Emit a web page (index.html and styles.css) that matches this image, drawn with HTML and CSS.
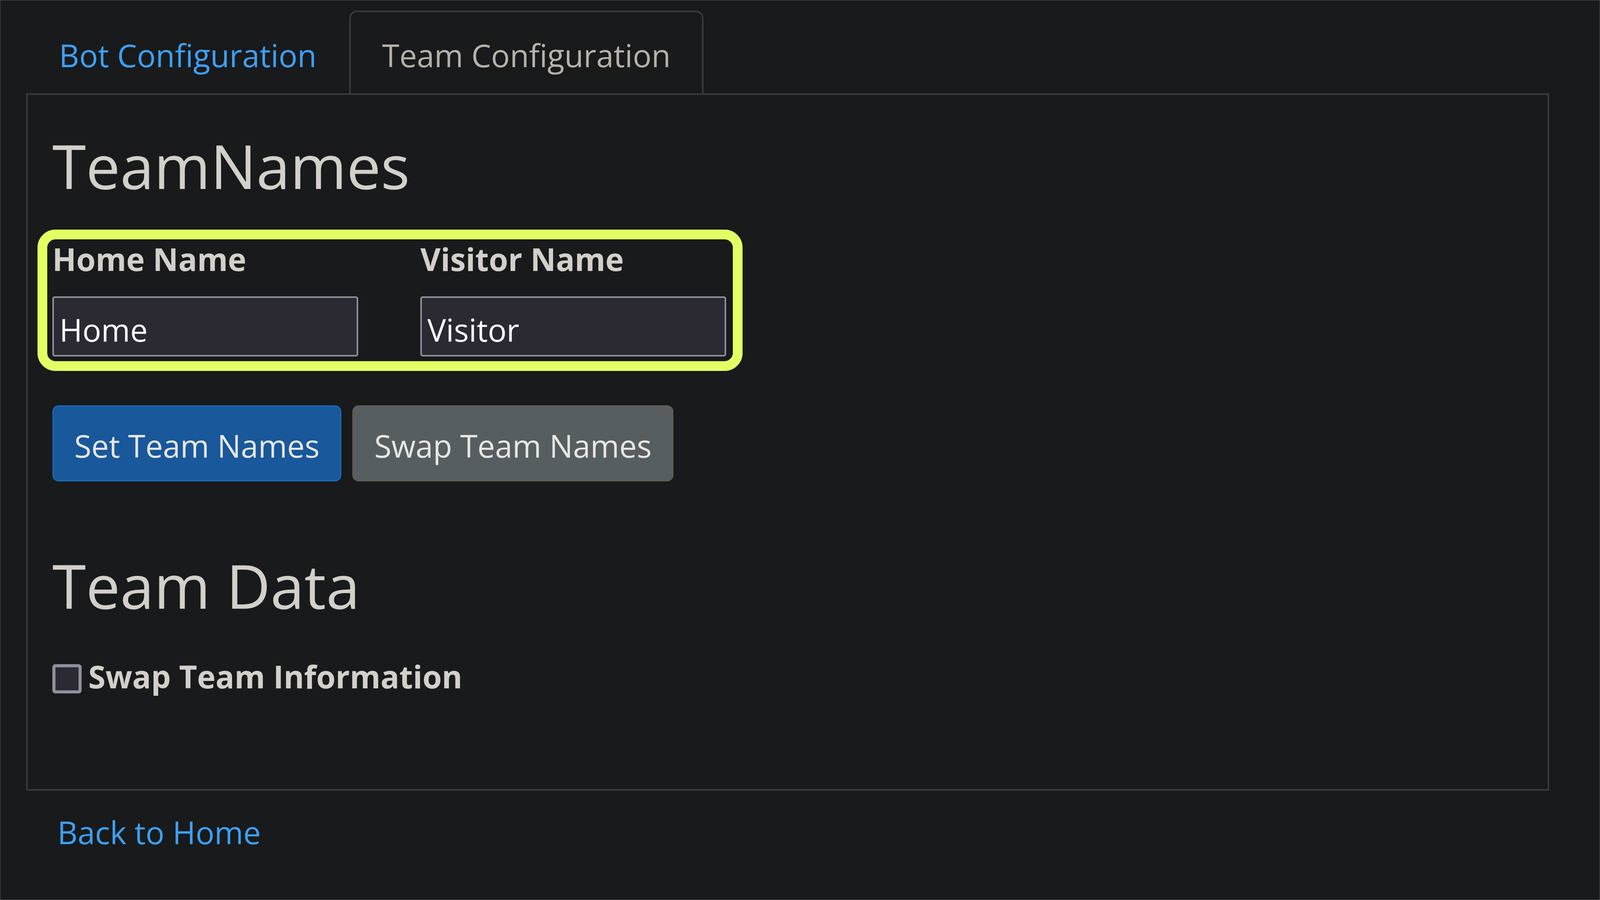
FILE: index.html
```html
<!DOCTYPE html>
<html lang="en">
<head>
<meta charset="utf-8">
<title>Team Configuration</title>
<link rel="stylesheet" href="styles.css">
</head>
<body>
<div class="page">
  <nav class="tabs">
    <a class="tab" href="#">Bot Configuration</a>
    <a class="tab active" href="#">Team Configuration</a>
  </nav>
  <section class="panel">
    <h2 class="title">TeamNames</h2>
    <div class="name-row">
      <div class="field">
        <label class="field-label" for="home">Home Name</label>
        <input id="home" class="field-input" type="text" value="Home">
      </div>
      <div class="field">
        <label class="field-label" for="visitor">Visitor Name</label>
        <input id="visitor" class="field-input" type="text" value="Visitor">
      </div>
    </div>
    <div class="actions">
      <button class="btn btn-primary" type="button">Set Team Names</button>
      <button class="btn btn-secondary" type="button">Swap Team Names</button>
    </div>
    <h2 class="title title-data">Team Data</h2>
    <label class="check">
      <input class="check-box" type="checkbox">
      <span>Swap Team Information</span>
    </label>
  </section>
  <p class="back"><a class="back-link" href="#">Back to Home</a></p>
</div>
</body>
</html>
```

FILE: styles.css
```css
html {
  background: #181a1b;
  min-height: 100%;
  box-shadow: inset 0 0 0 1px #58595b;
}

body {
  margin: 0;
  font-family: "Open Sans", "Noto Sans", sans-serif;
  font-size: 80px;
  line-height: 120px;
  color: #d3cfc9;
}

.page {
  margin: 0 130px 0 67px;
  padding-top: 27px;
}

.tabs {
  display: flex;
}

.tab {
  display: block;
  padding: 50px 80px 38px;
  border: 4px solid transparent;
  border-bottom: 0;
  border-radius: 20px 20px 0 0;
  color: #3ea0f5;
  text-decoration: none;
}

.tab.active {
  color: #b7b1a8;
  border-color: #373c3e;
}

.panel {
  border: 4px solid #373c3e;
  padding: 87px 63px 229px;
}

.title {
  margin: 0;
  font-size: 156px;
  line-height: 187px;
  font-weight: 400;
}

.name-row {
  display: grid;
  grid-template-columns: 783px 783px;
  column-gap: 159px;
  width: max-content;
  margin: 96px 0 0 -13px;
  padding: 0 17px 12px 13px;
  border-radius: 21px;
  outline: 25px solid #e2ff64;
}

.field-label {
  display: block;
  font-weight: 700;
  line-height: 100px;
  margin-bottom: 46px;
}

.field-input {
  display: block;
  box-sizing: border-box;
  width: 783px;
  height: 154px;
  margin: 0;
  padding: 14px 14px 0;
  border: 4px solid #8f8f9d;
  border-radius: 6px;
  background: #2b2a33;
  color: #fbfbfe;
  font-family: inherit;
  font-size: 80px;
  line-height: 120px;
}

.actions {
  display: flex;
  gap: 28px;
  margin-top: 113px;
}

.btn {
  margin: 0;
  padding: 39px 52px 28px;
  border: 4px solid;
  border-radius: 16px;
  font-family: inherit;
  font-size: 80px;
  line-height: 120px;
  color: #e8e6e3;
}

.btn-primary {
  background: #18589b;
  border-color: #1b64b1;
}

.btn-secondary {
  background: #575e62;
  border-color: #625b51;
}

.title-data {
  margin-top: 172px;
}

.check {
  display: flex;
  align-items: flex-start;
  margin-top: 80px;
  font-weight: 700;
}

.check-box {
  appearance: none;
  flex: none;
  box-sizing: border-box;
  width: 75px;
  height: 75px;
  margin: 29px 17px 0 0;
  border: 8px solid #8f8f9d;
  border-radius: 8px;
  background: #2b2a33;
}

.back {
  margin: 46px 0 0;
  padding-left: 80px;
}

.back-link {
  color: #3ea0f5;
  text-decoration: none;
}
```
